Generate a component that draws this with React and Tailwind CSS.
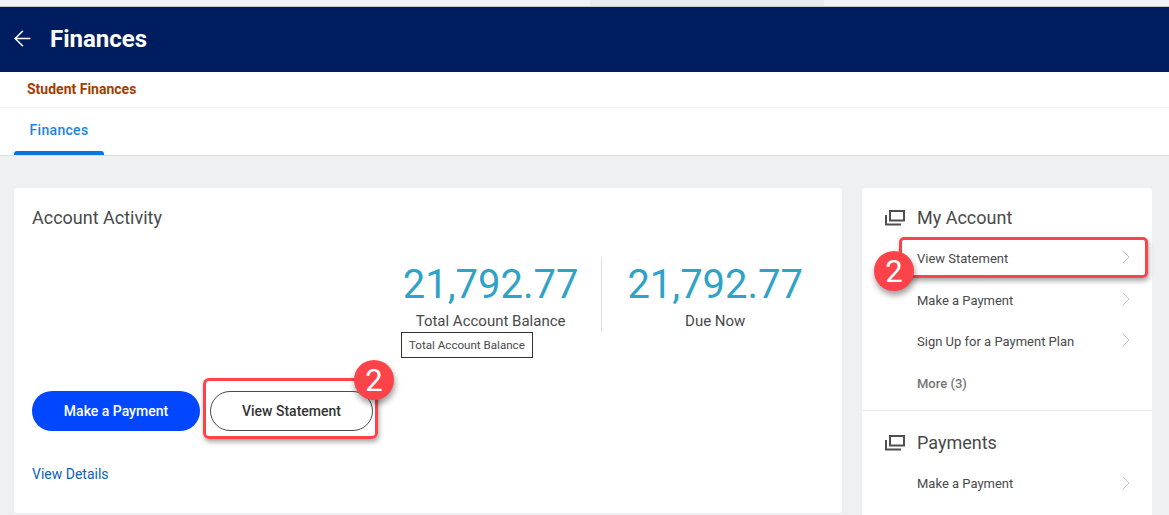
import React from 'react';
import { ArrowLeft, ChevronRight } from 'lucide-react';

const WindowsIcon = () => (
    <svg width="20" height="16" viewBox="0 0 20 16" fill="none" stroke="#4f4f4f" strokeWidth="2" className="shrink-0">
        <rect x="5" y="1" width="14" height="9.5" />
        <path d="M1 5v9.5h15" />
    </svg>
);

const Badge = ({ className }) => (
    <div className={`absolute flex h-10 w-10 items-center justify-center rounded-full bg-[#fb4349] text-[31px] leading-none text-white shadow-[1px_4px_6px_rgba(0,0,0,0.4)] ${className}`}>
        2
    </div>
);

const SideLink = ({ label, className = '' }) => (
    <div className={`flex h-[41.6px] items-center justify-between pr-[2px] text-[13px] text-[#494949] ${className}`}>
        <span>{label}</span>
        <ChevronRight size={24} strokeWidth={1} color="#c4c4c4" className="-mt-[3px]" />
    </div>
);

const Metric = ({ value, label }) => (
    <div className="flex flex-col items-center pt-[4px]">
        <div className="text-[40px] leading-[47px] tracking-[-0.02px] text-[#2fa3c7]">{value}</div>
        <div className="mt-[4px] text-[15px] leading-[18px] text-[#494949]">{label}</div>
    </div>
);

export default function App() {
    return (
        <div className="h-[515px] w-[1169px] overflow-hidden bg-[#eff0f2] font-['Roboto',sans-serif]">
            <div className="h-[6px] bg-[#f3f4f6]">
                <div className="ml-[590px] h-[6px] w-[234px] bg-[#e9ebee]" />
            </div>
            <div className="h-px bg-[#c8cacc]" />
            <header className="flex h-[65px] items-center bg-[#001e5f] pb-[2px] pl-[10px] text-white">
                <ArrowLeft size={25} strokeWidth={1.5} />
                <h1 className="ml-[15px] text-2xl font-bold">Finances</h1>
            </header>
            <div className="flex h-[36px] items-center border-b border-[#f3f3f3] bg-white pb-px pl-[27px] text-sm font-bold text-[#a33d00]">
                Student Finances
            </div>
            <nav className="h-[48px] border-b border-[#dcdfe2] bg-white pl-[14px]">
                <div className="relative flex h-[47px] w-[90px] items-center justify-center pb-[3px] text-sm font-medium tracking-[0.3px] text-[#1a86e0]">
                    Finances
                    <div className="absolute bottom-0 left-0 h-1 w-full rounded-t-[3px] bg-[#0875e1]" />
                </div>
            </nav>

            <main className="flex items-start gap-5 pl-[14px] pt-[32px]">
                <section className="relative h-[325px] w-[828px] rounded-[3px] bg-white pl-[18px] pt-[19px]">
                    <h2 className="text-lg leading-[22px] text-[#494949]">Account Activity</h2>
                    <div className="mt-[28px] flex justify-end pr-[39px]">
                        <Metric value="21,792.77" label="Total Account Balance" />
                        <div className="ml-[23px] mr-[25px] h-[74px] w-px bg-[#dfdfdf]" />
                        <Metric value="21,792.77" label="Due Now" />
                    </div>
                    <div className="mt-[60px] flex gap-[10px]">
                        <button className="h-10 w-[168px] rounded-full bg-[#0047ff] text-sm font-medium text-white">Make a Payment</button>
                        <button className="h-10 w-[163px] rounded-full border border-[#4a4a4a] bg-white text-sm font-medium text-[#333]">View Statement</button>
                    </div>
                    <a className="mt-[34px] block text-sm leading-[18px] text-[#0b62b8]">View Details</a>

                    {/* annotations */}
                    <div className="absolute left-[387px] top-[144px] border border-[#333] bg-white px-[7px] text-[11.6px] leading-[24px] text-[#494949]">
                        Total Account Balance
                    </div>
                    <div className="absolute left-[189px] top-[190px] h-[61px] w-[175px] rounded-[6px] border-[3px] border-[#fb4349] shadow-[1px_3px_5px_rgba(0,0,0,0.35)]" />
                    <Badge className="left-[340px] top-[172px]" />
                </section>

                <aside className="relative h-[330px] w-[290px] rounded-[3px] bg-white">
                    <div className="border-b border-[#e8eaed] pb-[6px] pl-[23px] pt-[17px]">
                        <div className="flex h-[26px] items-center gap-3">
                            <WindowsIcon />
                            <h2 className="text-lg text-[#494949]">My Account</h2>
                        </div>
                        <div className="mt-[7px] pl-[32px] pr-[12px]">
                            <SideLink label="View Statement" />
                            <SideLink label="Make a Payment" />
                            <SideLink label="Sign Up for a Payment Plan" />
                            <div className="flex h-[41.6px] items-center text-[13px] font-medium text-[#757575]">More (3)</div>
                        </div>
                    </div>
                    <div className="pl-[23px] pt-[19px]">
                        <div className="flex h-[26px] items-center gap-3">
                            <WindowsIcon />
                            <h2 className="text-lg text-[#494949]">Payments</h2>
                        </div>
                        <div className="mt-[7px] pl-[32px] pr-[12px]">
                            <SideLink label="Make a Payment" />
                        </div>
                    </div>

                    {/* annotations */}
                    <div className="absolute left-[37px] top-[49px] h-[41px] w-[249px] rounded-[5px] border-[3px] border-[#fb4349] shadow-[1px_3px_5px_rgba(0,0,0,0.35)]" />
                    <Badge className="left-[12px] top-[63px]" />
                </aside>
            </main>
        </div>
    );
}
